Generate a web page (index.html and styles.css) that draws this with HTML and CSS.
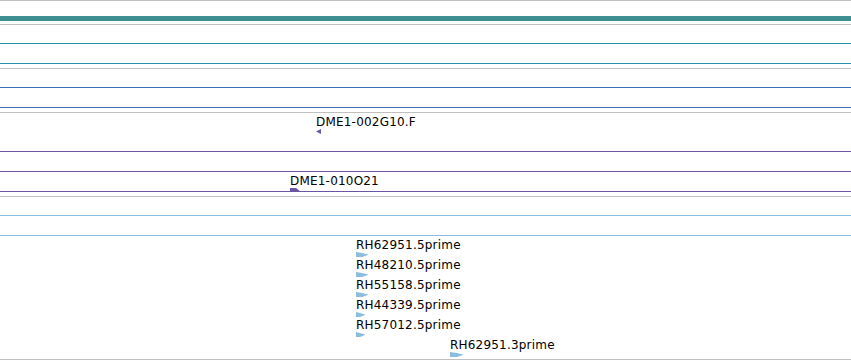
FILE: index.html
```html
<!DOCTYPE html>
<html lang="en">

<head>
    <meta charset="UTF-8">
    <title>Tracks</title>
    <link rel="stylesheet" href="styles.css">
</head>

<body>

    <div id="tracks">
        <!-- ruler -->
        <div class="track ruler">
            <div class="ruler-bar"></div>
        </div>

        <!-- track 1 -->
        <div class="track">
            <div class="row row-first teal"></div>
            <div class="row teal"></div>
            <div class="spacer"></div>
        </div>

        <!-- track 2 -->
        <div class="track">
            <div class="row row-first blue"></div>
            <div class="row blue"></div>
            <div class="spacer"></div>
        </div>

        <!-- track 3: clones -->
        <div class="track">
            <div class="row row-tall purple">
                <div class="feature" style="margin-left: 316px">
                    <span class="label">DME1-002G10.F</span>
                    <svg class="glyph" width="5" height="5" viewBox="0 0 5 5">
                        <polygon points="0,2.5 5,0 5,5" fill="#6b56a3" />
                    </svg>
                </div>
            </div>
            <div class="row purple"></div>
            <div class="row purple">
                <div class="feature" style="margin-left: 290px">
                    <span class="label">DME1-010O21</span>
                    <svg class="glyph" width="11" height="4" viewBox="0 0 11 4">
                        <polygon points="0,0 6,0 11,4 0,4" fill="#6b56a3" />
                    </svg>
                </div>
            </div>
            <div class="spacer"></div>
        </div>

        <!-- track 4: ESTs -->
        <div class="track last">
            <div class="row row-first lightblue"></div>
            <div class="row lightblue"></div>
            <div class="stack">
                <div class="feature est" style="margin-left: 356px">
                    <span class="label">RH62951.5prime</span>
                    <svg class="glyph" width="12" height="5" viewBox="0 0 12 5">
                        <polygon points="0,0 6,1 12,2.5 12,3 6,5 0,5" fill="#8cbde0" />
                    </svg>
                </div>
                <div class="feature est" style="margin-left: 356px">
                    <span class="label">RH48210.5prime</span>
                    <svg class="glyph" width="12" height="5" viewBox="0 0 12 5">
                        <polygon points="0,0 6,1 12,2.5 12,3 6,5 0,5" fill="#8cbde0" />
                    </svg>
                </div>
                <div class="feature est" style="margin-left: 356px">
                    <span class="label">RH55158.5prime</span>
                    <svg class="glyph" width="12" height="5" viewBox="0 0 12 5">
                        <polygon points="0,0 6,1 12,2.5 12,3 6,5 0,5" fill="#8cbde0" />
                    </svg>
                </div>
                <div class="feature est" style="margin-left: 356px">
                    <span class="label">RH44339.5prime</span>
                    <svg class="glyph" width="9" height="5" viewBox="0 0 9 5">
                        <polygon points="0,0 4,1 9,2.5 9,3 4,5 0,5" fill="#8cbde0" />
                    </svg>
                </div>
                <div class="feature est" style="margin-left: 356px">
                    <span class="label">RH57012.5prime</span>
                    <svg class="glyph" width="9" height="5" viewBox="0 0 9 5">
                        <polygon points="0,0 4,1 9,2.5 9,3 4,5 0,5" fill="#8cbde0" />
                    </svg>
                </div>
                <div class="feature est" style="margin-left: 450px">
                    <span class="label">RH62951.3prime</span>
                    <svg class="glyph" width="13" height="5" viewBox="0 0 13 5">
                        <polygon points="0,0 7,1 13,2.5 13,3 7,5 0,5" fill="#8cbde0" />
                    </svg>
                </div>
            </div>
        </div>
    </div>

</body>

</html>
```

FILE: styles.css
```css
html,
body {
    margin: 0;
    padding: 0;
    background: white;
    color: black;
    font-family: "DejaVu Sans", sans-serif;
    height: 100%;
    overflow: hidden;
}

#tracks {
    display: flex;
    flex-direction: column;
    width: 851px;
}

.track {
    display: flex;
    flex-direction: column;
    border-top: 1px solid #c0c0c0;
}

.track.last {
    border-bottom: 1px solid #c0c0c0;
}

.ruler {
    height: 23px;
}

.ruler-bar {
    margin-top: 15px;
    height: 5px;
    background: #408f90;
}

.row {
    height: 19px;
    border-bottom: 1px solid;
    display: flex;
}

.row-first {
    height: 18px;
}

.row-tall {
    height: 38px;
}

.spacer {
    height: 4px;
}

.teal {
    border-color: #2590a9;
}

.blue {
    border-color: #3b6bb5;
}

.purple {
    border-color: #6b56a3;
}

.lightblue {
    border-color: #8cbde0;
}

.feature {
    display: flex;
    flex-direction: column;
    align-items: flex-start;
    padding-top: 2px;
}

.label {
    font-size: 12px;
    line-height: 14px;
    letter-spacing: 0.2px;
    white-space: nowrap;
    flex-shrink: 0;
}

.glyph {
    display: block;
    flex-shrink: 0;
}

.stack {
    display: flex;
    flex-direction: column;
    height: 123px;
}

.est {
    padding-top: 0;
    height: 20px;
}

.stack .est:first-child {
    margin-top: 2px;
}
```
